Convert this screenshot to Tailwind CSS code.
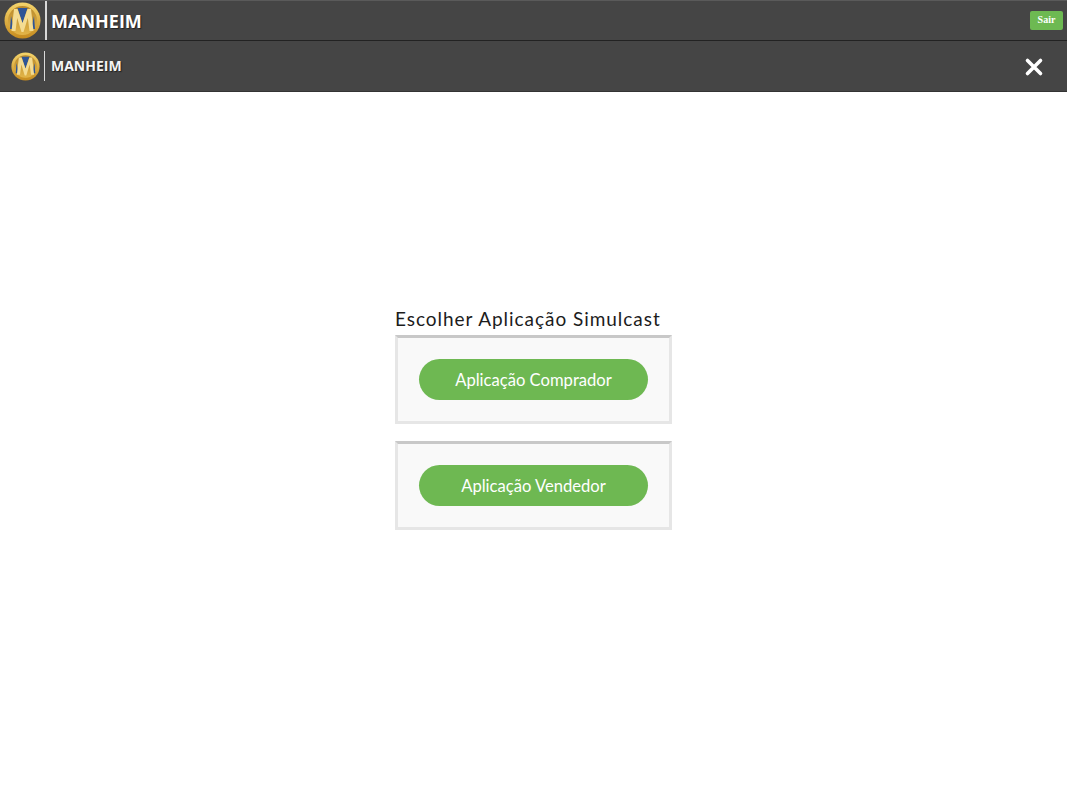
<!DOCTYPE html>
<html lang="en">
<head>
    <meta charset="UTF-8">
    <title>Simulcast</title>
    <script src="https://cdn.jsdelivr.net/npm/@tailwindcss/browser@4"></script>
</head>
<body class="bg-white h-[800px] overflow-hidden font-['Lato',sans-serif]">

    <!-- top bar -->
    <div class="h-[41px] bg-[#454545] border-t border-t-[#5a5a5a] border-b border-b-[#222222] flex items-center justify-between pl-[4px] pr-[4px]">
        <div class="flex items-center">
            <svg width="37" height="37" viewBox="0 0 37 37">
                <defs>
                    <linearGradient id="gold1" x1="0" y1="0" x2="0" y2="1">
                        <stop offset="0" stop-color="#f5d56c"/>
                        <stop offset="1" stop-color="#c68b1e"/>
                    </linearGradient>
                    <linearGradient id="face1" x1="0" y1="0" x2="0" y2="1">
                        <stop offset="0" stop-color="#b98a2c"/>
                        <stop offset="1" stop-color="#e3b548"/>
                    </linearGradient>
                </defs>
                <circle cx="18.5" cy="18.5" r="18" fill="url(#gold1)"/>
                <circle cx="18.5" cy="18.5" r="14.5" fill="url(#face1)"/>
                <path d="M13.5 6 H23.5 L18.5 22 Z" fill="#2f5596"/>
                <path d="M7 14 L10 27 H6 Z M30 14 L27 27 H31 Z" fill="#2f5596"/>
                <path d="M10 7 H13.5 L18.5 21 L23.5 7 H27 L29.5 29 H25.5 L23.8 16 L19.5 30 H17.5 L13.2 16 L11.5 29 H7.5 Z" fill="#f4dc92"/>
            </svg>
            <div class="w-[2px] h-[39px] bg-[#d8d8d8] ml-[4px]"></div>
            <span class="ml-[4px] text-[18px] leading-none font-bold text-white font-['Open_Sans',sans-serif] [text-shadow:1px_1px_1px_#222]">MANHEIM</span>
        </div>
        <button class="w-[33px] h-[19px] mt-[-1px] rounded-[2px] bg-[#6db952] text-white text-[10px] leading-none font-bold font-['Liberation_Serif',serif]">Sair</button>
    </div>

    <!-- second bar -->
    <div class="h-[51px] bg-[#454545] border-b border-b-[#333333] flex items-center justify-between pl-[11px] pr-[23px]">
        <div class="flex items-center">
            <svg width="29" height="29" viewBox="0 0 37 37">
                <defs>
                    <linearGradient id="gold2" x1="0" y1="0" x2="0" y2="1">
                        <stop offset="0" stop-color="#f5d56c"/>
                        <stop offset="1" stop-color="#c68b1e"/>
                    </linearGradient>
                    <linearGradient id="face2" x1="0" y1="0" x2="0" y2="1">
                        <stop offset="0" stop-color="#b98a2c"/>
                        <stop offset="1" stop-color="#e3b548"/>
                    </linearGradient>
                </defs>
                <circle cx="18.5" cy="18.5" r="18" fill="url(#gold2)"/>
                <circle cx="18.5" cy="18.5" r="14.5" fill="url(#face2)"/>
                <path d="M13.5 6 H23.5 L18.5 22 Z" fill="#2f5596"/>
                <path d="M7 14 L10 27 H6 Z M30 14 L27 27 H31 Z" fill="#2f5596"/>
                <path d="M10 7 H13.5 L18.5 21 L23.5 7 H27 L29.5 29 H25.5 L23.8 16 L19.5 30 H17.5 L13.2 16 L11.5 29 H7.5 Z" fill="#f4dc92"/>
            </svg>
            <div class="w-[1px] h-[30px] bg-[#d8d8d8] ml-[4px]"></div>
            <span class="ml-[6px] text-[14px] leading-none font-bold text-[#f4f4f4] font-['Open_Sans',sans-serif] [text-shadow:1px_1px_1px_#222]">MANHEIM</span>
        </div>
        <svg width="20" height="20" viewBox="0 0 20 20" class="mt-[2px]">
            <path d="M3.5 3.5 L16.5 16.5 M16.5 3.5 L3.5 16.5" stroke="#ffffff" stroke-width="3.6" stroke-linecap="round"/>
        </svg>
    </div>

    <!-- chooser -->
    <div class="w-[277px] ml-[395px] mt-[211px]">
        <h1 class="text-[19px] leading-[32px] pb-[2px] h-[32px] text-[#1c1c1c] tracking-[0.96px] whitespace-nowrap">Escolher Aplicação Simulcast</h1>
        <div class="h-[89px] bg-[#f9f9f9] border-[3px] border-[#e6e6e6] border-t-[#c8c8c8] px-[21px] pt-[21px]">
            <button class="w-[229px] h-[41px] pt-[2px] rounded-full bg-[#6eb852] text-white text-[16.6px]">Aplicação Comprador</button>
        </div>
        <div class="h-[89px] mt-[17px] bg-[#f9f9f9] border-[3px] border-[#e6e6e6] border-t-[#c8c8c8] px-[21px] pt-[21px]">
            <button class="w-[229px] h-[41px] pt-[2px] rounded-full bg-[#6eb852] text-white text-[16.6px]">Aplicação Vendedor</button>
        </div>
    </div>

</body>
</html>
